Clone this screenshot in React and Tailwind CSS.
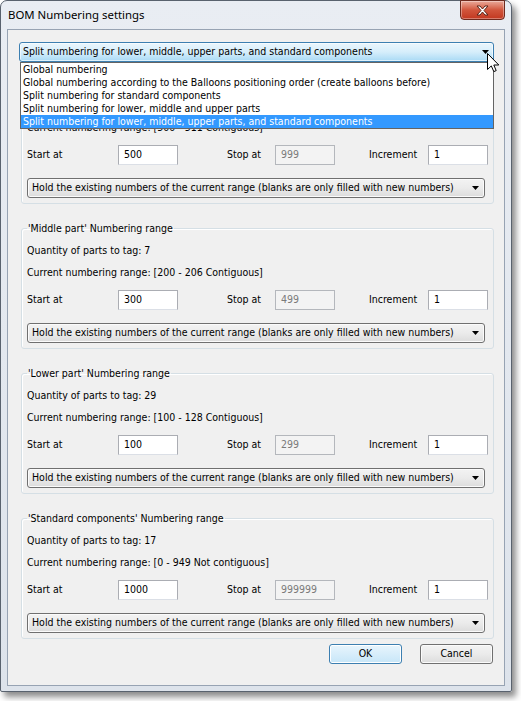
import React from 'react';

const body = "font-['DejaVu_Sans_Condensed','DejaVu_Sans',sans-serif] [font-stretch:condensed] text-[10.5px] text-black";

const modes = [
  'Global numbering',
  'Global numbering according to the Balloons positioning order (create balloons before)',
  'Split numbering for standard components',
  'Split numbering for lower, middle and upper parts',
  'Split numbering for lower, middle, upper parts, and standard components',
];

const groups = [
  { title: "'Upper part' Numbering range", qty: 12, range: '[500 - 511 Contiguous]', start: '500', stop: '999' },
  { title: "'Middle part' Numbering range", qty: 7, range: '[200 - 206 Contiguous]', start: '300', stop: '499' },
  { title: "'Lower part' Numbering range", qty: 29, range: '[100 - 128 Contiguous]', start: '100', stop: '299' },
  { title: "'Standard components' Numbering range", qty: 17, range: '[0 - 949 Not contiguous]', start: '1000', stop: '999999' },
];

const Arrow = () => (
  <svg width="7" height="4" viewBox="0 0 7 4" className="shrink-0">
    <path d="M0 0h7L3.5 4z" fill="#000" />
  </svg>
);

const Field = ({ value, disabled }) => (
  <div
    className={
      'flex h-[20px] w-[60px] shrink-0 items-center border pl-[5px] ' +
      (disabled
        ? 'border-[#b4b7bc] bg-[#f3f3f3] text-[#7a7a7a]'
        : 'border-[#abadb3] border-b-[#dbdfe6] bg-white')
    }
  >
    {value}
  </div>
);

// the first group sits under the open list, so its top lines are hidden
const Group = ({ g, covered, className }) => (
  <fieldset className={'ml-[2px] rounded-[3px] border border-[#d5dfe5] px-[5px] pb-[5px] pt-[4px] shadow-[inset_1px_1px_0_#ffffff] ' + className}>
    <legend className={'h-[14px] px-[1px] leading-[14px] ' + (covered ? 'invisible' : '')}>{g.title}</legend>
    <div className={'h-[22px] leading-[22px] ' + (covered ? 'invisible' : '')}>Quantity of parts to tag: {g.qty}</div>
    <div className="h-[22px] leading-[22px]">Current numbering range: {g.range}</div>
    <div className="mt-[7px] flex h-[20px] items-center">
      <span className="w-[91px] shrink-0">Start at</span>
      <Field value={g.start} />
      <span className="ml-[49px] w-[48px] shrink-0">Stop at</span>
      <Field value={g.stop} disabled />
      <span className="ml-[34px] w-[59px] shrink-0">Increment</span>
      <Field value="1" />
    </div>
    <div className="mt-[13px] flex h-[20px] w-[458px] items-center justify-between whitespace-nowrap rounded-[3px] border border-[#707070] bg-gradient-to-b from-[#f3f3f3] via-[#ebebeb] to-[#dcdcdc] pl-[4px] pr-[5px] shadow-[inset_0_0_0_1px_#fbfbfb]">
      <span>Hold the existing numbers of the current range (blanks are only filled with new numbers)</span>
      <Arrow />
    </div>
  </fieldset>
);

export default function App() {
  return (
    <div className={'relative h-[701px] w-[521px] bg-white ' + body}>
      <div className="flex h-[692px] w-[512px] flex-col rounded-t-[7px] rounded-b-[2px] border border-[#59626e] bg-gradient-to-b from-[#e9edf3] to-[#dde3eb] shadow-[4px_5px_6px_rgba(0,0,0,0.45)]">
        {/* title bar */}
        <div className="flex h-[28px] shrink-0">
          <span className="pl-[7px] pt-[6px] font-['Noto_Sans',sans-serif] text-[11.4px] leading-[16px]">
            BOM Numbering settings
          </span>
          <div className="-mt-px ml-auto mr-[6px] flex h-[20px] w-[45px] items-center justify-center rounded-b-[4px] border border-[#6e2a1e] bg-gradient-to-b from-[#e9a99a] via-[#d1553c] to-[#c2371f] shadow-[inset_0_0_0_1px_rgba(255,255,255,0.35)]">
            <svg width="13" height="11" viewBox="0 0 13 11">
              <path
                d="M1 1h3l2.5 3L9 1h3L8 5.5 12 10H9L6.5 7 4 10H1l4-4.5z"
                fill="#ffffff"
                stroke="#5a2418"
                strokeWidth="1"
                strokeLinejoin="round"
              />
            </svg>
          </div>
        </div>

        {/* client area */}
        <div className="mx-[6px] mb-[5px] flex flex-1 flex-col border border-[#97a3b3] bg-[#f0f0f0] pl-[11px] pr-[10px] pt-[12px]">
          <div className="relative">
            <div className="flex h-[20px] items-center justify-between whitespace-nowrap rounded-[3px] border border-[#3c7fb1] bg-gradient-to-b from-[#eaf6fd] via-[#d6eefb] to-[#a9daf5] pl-[3px] pr-[4px] shadow-[inset_0_0_0_1px_rgba(255,255,255,0.6)]">
              <span>{modes[4]}</span>
              <Arrow />
            </div>
            <div className="absolute left-[1px] right-0 top-full z-10 whitespace-nowrap border border-[#646464] bg-white">
              {modes.map((m, i) => (
                <div
                  key={m}
                  className={
                    'h-[13px] pl-[2px] leading-[13px] ' +
                    (i === 4 ? 'bg-[#3399ff] text-white' : '')
                  }
                >
                  {m}
                </div>
              ))}
            </div>
          </div>

          {groups.map((g, i) => (
            <Group key={g.title} g={g} covered={i === 0} className={i === 0 ? 'mt-[14px]' : 'mt-[17px]'} />
          ))}

          <div className="mr-[1px] mt-[5px] flex justify-end gap-[18px]">
            <div className="flex h-[20px] w-[73px] items-center justify-center rounded-[3px] border border-[#3c7fb1] bg-gradient-to-b from-[#e8f5fd] to-[#c7e6f8] shadow-[inset_0_0_0_1px_#ffffff]">
              OK
            </div>
            <div className="flex h-[20px] w-[73px] items-center justify-center rounded-[3px] border border-[#707070] bg-gradient-to-b from-[#f3f3f3] via-[#ebebeb] to-[#dcdcdc] shadow-[inset_0_0_0_1px_#fbfbfb]">
              Cancel
            </div>
          </div>
        </div>
      </div>

      {/* mouse pointer */}
      <svg className="absolute left-[487px] top-[53px] z-20" width="13" height="20" viewBox="0 0 13 20">
        <path
          d="M0.5 0.5V16.5L4.3 12.9L6.8 18.6L9.2 17.6L6.8 12H11.8Z"
          fill="#ffffff"
          stroke="#000000"
          strokeWidth="1"
          strokeLinejoin="round"
        />
      </svg>
    </div>
  );
}
